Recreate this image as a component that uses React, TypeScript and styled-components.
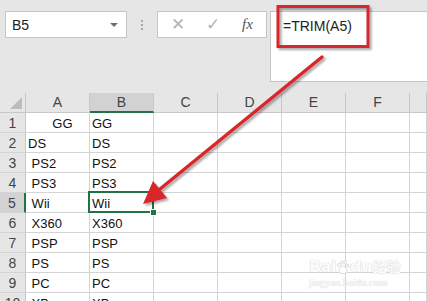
import React from "react";
import styled, { createGlobalStyle, css } from "styled-components";

const Global = createGlobalStyle`
  html, body { margin: 0; padding: 0; }
  body {
    width: 427px; height: 301px; overflow: hidden;
    background: #e6e6e6;
    font-family: "Liberation Sans", Arial, sans-serif;
  }
`;

const Page = styled.div`
  position: relative;
  width: 427px;
  height: 301px;
  overflow: hidden;
  background: #e6e6e6;
  display: flex;
  flex-direction: column;
`;

const FormulaBar = styled.div`
  flex-shrink: 0;
  display: flex;
  align-items: flex-start;
  padding-top: 11px;
  height: 93px;
  box-sizing: border-box;
`;

const NameBox = styled.div`
  margin-left: 5px;
  width: 122px;
  height: 27px;
  box-sizing: border-box;
  border: 1px solid #c6c6c6;
  background: #fff;
  display: flex;
  align-items: center;
  justify-content: space-between;
  padding: 0 8px 0 6px;
  font-size: 14px;
  color: #222;
`;

const DropArrow = styled.span`
  width: 0; height: 0;
  border-left: 4px solid transparent;
  border-right: 4px solid transparent;
  border-top: 4px solid #707070;
`;

const Grip = styled.div`
  width: 30px;
  height: 27px;
  display: flex;
  flex-direction: column;
  align-items: center;
  justify-content: center;
  gap: 2px;
`;

const GripDot = styled.span`
  width: 2px; height: 2px; background: #a6a6a6;
`;

const ActionBox = styled.div`
  width: 110px;
  height: 27px;
  box-sizing: border-box;
  border: 1px solid #c6c6c6;
  background: #fff;
  display: grid;
  grid-template-columns: repeat(3, 35px);
  padding-left: 2px;
  align-items: center;
  justify-items: center;
`;

const ActionIcon = styled.span<{ $fx?: boolean }>`
  color: #b4b4b4;
  font-size: 17px;
  line-height: 1;
  ${(p) =>
    p.$fx &&
    css`
      color: #555;
      font-family: "Liberation Serif", "Times New Roman", serif;
      font-style: italic;
      font-size: 15px;
    `}
`;

const FormulaInput = styled.div`
  margin-left: 3px;
  flex: 1;
  height: 71px;
  box-sizing: border-box;
  border: 1px solid #c6c6c6;
  border-right: none;
  background: #fff;
  padding: 6px 0 0 12px;
  font-size: 14px;
  color: #222;
`;

const Sheet = styled.div`
  flex-shrink: 0;
  display: grid;
  grid-template-columns: 26px repeat(6, 64px) 1fr;
  grid-auto-rows: 20px;
  background: #fff;
`;

const HeadCell = styled.div<{ $sel?: boolean; $row?: boolean }>`
  box-sizing: border-box;
  background: ${(p) => (p.$sel ? "#d2d2d2" : "#e6e6e6")};
  border-right: 1px solid #c8c8c8;
  border-bottom: 1px solid #c8c8c8;
  color: #444;
  font-size: 14px;
  line-height: 19px;
  text-align: center;
  ${(p) =>
    p.$sel && !p.$row &&
    css`
      border-bottom: 2px solid #217346;
    `}
  ${(p) =>
    p.$sel && p.$row &&
    css`
      border-right: 2px solid #217346;
    `}
  ${(p) =>
    p.$row &&
    css`
      border-bottom-color: #d4d4d4;
      line-height: 20px;
    `}
`;

const Corner = styled(HeadCell)`
  position: relative;
  &::after {
    content: "";
    position: absolute;
    right: 3px;
    bottom: 3px;
    width: 0; height: 0;
    border-left: 12px solid transparent;
    border-bottom: 12px solid #bcbcbc;
  }
`;

const Cell = styled.div<{ $align?: "left" | "right"; $active?: boolean }>`
  position: relative;
  box-sizing: border-box;
  border-right: 1px solid #d4d4d4;
  border-bottom: 1px solid #d4d4d4;
  background: #fff;
  font-size: 13px;
  line-height: 19px;
  padding: 1px 2px 0 2px;
  white-space: pre;
  color: #111;
  text-align: ${(p) => p.$align ?? "left"};
  ${(p) =>
    p.$active &&
    css`
      z-index: 2;
      &::before {
        content: "";
        position: absolute;
        left: -2px; top: -2px; right: -1px; bottom: -1px;
        border: 2px solid #217346;
      }
      &::after {
        content: "";
        position: absolute;
        right: -4px; bottom: -4px;
        width: 5px; height: 5px;
        background: #217346;
        border: 1px solid #fff;
      }
    `}
`;

const Annotation = styled.svg`
  position: absolute;
  left: 0; top: 0;
  width: 427px; height: 301px;
  pointer-events: none;
  z-index: 5;
`;

const Watermark = styled.div`
  position: absolute;
  left: 309px;
  top: 257px;
  z-index: 4;
  display: flex;
  flex-direction: column;
  align-items: flex-start;
  color: rgba(255, 255, 255, 0.95);
  pointer-events: none;
`;

const WmLogo = styled.div`
  display: flex;
  align-items: flex-end;
  font-family: "DejaVu Sans", sans-serif;
  font-weight: bold;
  font-size: 16px;
  line-height: 19px;
  letter-spacing: -0.5px;
  text-shadow: 0 0 1px #d0d0d0, 0 0 1px #d0d0d0;
`;

const WmCjk = styled.span`
  font-family: "Noto Sans CJK SC", sans-serif;
  font-size: 14px;
  letter-spacing: 0;
  margin-left: 1px;
`;

const WmUrl = styled.div`
  font-family: "Liberation Serif", serif;
  font-size: 10.5px;
  line-height: 12px;
  color: rgba(255, 255, 255, 0.95);
  text-shadow: 0 0 1px #d4d4d4, 0 0 1px #d4d4d4;
  margin-top: 1px;
`;

const cols = ["A", "B", "C", "D", "E", "F", ""];

const rows: [string, string, "left" | "right"][] = [
  ["GG    ", "GG", "right"],
  ["DS", "DS", "left"],
  [" PS2", "PS2", "left"],
  [" PS3", "PS3", "left"],
  [" Wii", "Wii", "left"],
  [" X360", "X360", "left"],
  [" PSP", "PSP", "left"],
  [" PS", "PS", "left"],
  [" PC", "PC", "left"],
  [" XB", "XB", "left"],
];

export default function App() {
  return (
    <Page>
      <Global />
      <FormulaBar>
        <NameBox>
          <span>B5</span>
          <DropArrow />
        </NameBox>
        <Grip>
          <GripDot />
          <GripDot />
          <GripDot />
        </Grip>
        <ActionBox>
          <ActionIcon>✕</ActionIcon>
          <ActionIcon>✓</ActionIcon>
          <ActionIcon $fx>fx</ActionIcon>
        </ActionBox>
        <FormulaInput>=TRIM(A5)</FormulaInput>
      </FormulaBar>
      <Sheet>
        <Corner />
        {cols.map((c) => (
          <HeadCell key={"h" + c} $sel={c === "B"}>
            {c}
          </HeadCell>
        ))}
        {rows.map(([a, b, align], i) => (
          <React.Fragment key={i}>
            <HeadCell $row $sel={i === 4}>
              {i + 1}
            </HeadCell>
            <Cell $align={align}>{a}</Cell>
            <Cell $active={i === 4}>{b}</Cell>
            <Cell />
            <Cell />
            <Cell />
            <Cell />
            <Cell />
          </React.Fragment>
        ))}
      </Sheet>
      <Watermark>
        <WmLogo>
          <span>Bai</span>
          <svg width="14" height="19" viewBox="0 0 20 22">
            <g fill="#fff" stroke="#cfcfcf" strokeWidth="1">
              <ellipse cx="4" cy="9" rx="2" ry="2.5" />
              <ellipse cx="8" cy="5" rx="2" ry="2.5" />
              <ellipse cx="13" cy="5" rx="2" ry="2.5" />
              <ellipse cx="17" cy="10" rx="1.8" ry="2.2" />
              <path d="M10 10 C7 10 3 16 5 20 C7 21.5 13 21.5 15 20 C17 16 13 10 10 10 Z" />
            </g>
          </svg>
          <span>du</span>
          <WmCjk>经验</WmCjk>
        </WmLogo>
        <WmUrl>jingyan.baidu.com</WmUrl>
      </Watermark>
      <Annotation viewBox="0 0 427 301">
        <defs>
          <filter id="sh" x="-20%" y="-20%" width="140%" height="140%">
            <feDropShadow dx="2" dy="2" stdDeviation="1.2" floodColor="#000" floodOpacity="0.35" />
          </filter>
        </defs>
        <g filter="url(#sh)">
          <rect x="278" y="6.5" width="90" height="40" fill="none" stroke="#d9252b" strokeWidth="3" />
          <line x1="322" y1="57" x2="160" y2="189" stroke="#d9252b" strokeWidth="3.5" strokeLinecap="round" />
          <polygon points="143,204 153,181 167,198" fill="#d9252b" />
        </g>
      </Annotation>
    </Page>
  );
}
